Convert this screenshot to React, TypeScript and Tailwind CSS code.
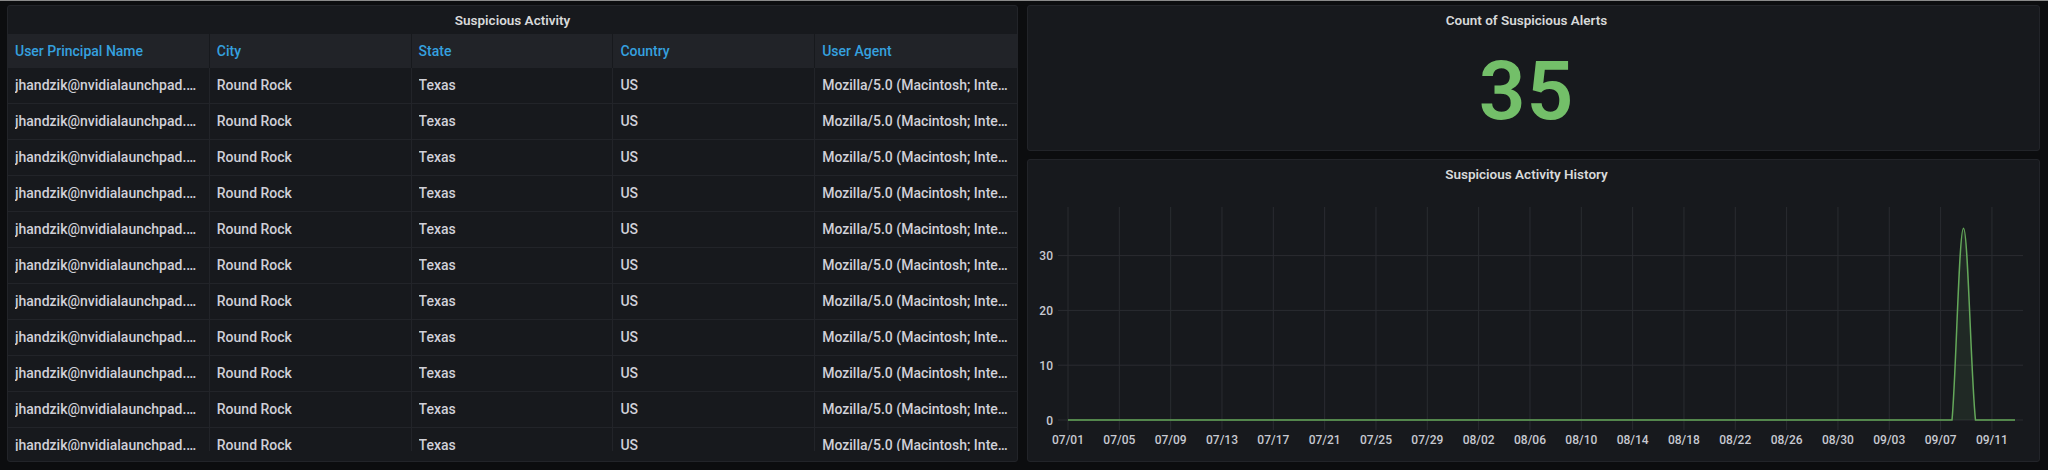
import React from "react";

// ---- data ----
const COLUMNS = ["User Principal Name", "City", "State", "Country", "User Agent"];

const ROWS = Array.from({ length: 11 }, (_, i) => ({
  id: i,
  upn: "jhandzik@nvidialaunchpad.onmicrosoft.com",
  city: "Round Rock",
  state: "Texas",
  country: "US",
  agent:
    "Mozilla/5.0 (Macintosh; Intel Mac OS X 10_15_7) AppleWebKit/537.36 (KHTML, like Gecko) Chrome/105.0.0.0 Safari/537.36",
}));

const X_LABELS = [
  "07/01", "07/05", "07/09", "07/13", "07/17", "07/21", "07/25", "07/29", "08/02", "08/06",
  "08/10", "08/14", "08/18", "08/22", "08/26", "08/30", "09/03", "09/07", "09/11",
];

const Y_TICKS = [0, 10, 20, 30];

// chart geometry (svg coords)
const X0 = 40;
const X_STEP = 51.33;
const Y0 = 232;
const Y_SCALE = 5.48;
const yOf = (v: number) => Y0 - v * Y_SCALE;

function Panel({
  title,
  className,
  titleClass = "",
  children,
}: {
  title: string;
  className?: string;
  titleClass?: string;
  children: React.ReactNode;
}) {
  return (
    <div
      className={`flex flex-col rounded-[3px] border border-[#222429] bg-[#17191d] overflow-hidden ${className ?? ""}`}
    >
      <div
        className={`h-[28px] shrink-0 flex items-center justify-center text-[13.5px] font-semibold text-[#d8d9da] ${titleClass}`}
      >
        {title}
      </div>
      {children}
    </div>
  );
}

function SuspiciousTable() {
  return (
    <Panel title="Suspicious Activity" className="w-[1011px] h-[457px]">
      <div className="flex-1 min-h-0 pb-[10px] flex flex-col">
        {/* 表头 */}
        <div className="grid grid-cols-5 h-[34px] shrink-0 bg-[#212328]">
          {COLUMNS.map((c) => (
            <div
              key={c}
              className="flex items-center px-[7px] border-r border-[#17191d] last:border-r-0 text-[14px] font-medium text-[#35a0df]"
            >
              {c}
            </div>
          ))}
        </div>
        {/* 数据行 */}
        <div className="flex-1 min-h-0 overflow-hidden">
          {ROWS.map((r) => (
            <div key={r.id} className="grid grid-cols-5 h-[36px] border-b border-[#222429]">
              {[r.upn, r.city, r.state, r.country, r.agent].map((v, j) => (
                <div
                  key={j}
                  className="flex items-center min-w-0 px-[7px] border-r border-[#222429] last:border-r-0 text-[14px] font-medium text-[#d0d0d8]"
                >
                  <span className="truncate">{v}</span>
                </div>
              ))}
            </div>
          ))}
        </div>
      </div>
    </Panel>
  );
}

function StatPanel() {
  return (
    <Panel title="Count of Suspicious Alerts" className="h-[146px]" titleClass="pr-[14px]">
      <div className="flex-1 flex items-center justify-center pr-[14px] pb-[2px]">
        <span className="text-[82px] leading-none font-semibold tracking-[1px] text-[#73bf69]">35</span>
      </div>
    </Panel>
  );
}

function HistoryChart() {
  const spike = `M${X0} ${Y0} L924 ${Y0} C928 190 931 ${yOf(35)} 935.5 ${yOf(35)} C940 ${yOf(35)} 943 190 947.5 ${Y0} L987 ${Y0}`;
  return (
    <Panel title="Suspicious Activity History" className="flex-1" titleClass="pr-[14px]">
      <svg width={1011} height={274} className="block shrink-0">
        {/* 网格 */}
        {X_LABELS.map((_, i) => {
          const x = X0 + i * X_STEP;
          return <line key={i} x1={x} x2={x} y1={19} y2={242} stroke="#2a2c31" strokeWidth={1} />;
        })}
        {Y_TICKS.map((v) => (
          <line key={v} x1={30} x2={995} y1={yOf(v)} y2={yOf(v)} stroke="#2a2c31" strokeWidth={1} />
        ))}
        {/* 坐标轴文字 */}
        {Y_TICKS.map((v) => (
          <text
            key={v}
            x={25}
            y={yOf(v) + 4.5}
            textAnchor="end"
            fontSize={12}
            fontWeight={500}
            fill="#c7c9d1"
            fontFamily="Roboto, 'Liberation Sans', sans-serif"
          >
            {v}
          </text>
        ))}
        {X_LABELS.map((l, i) => (
          <text
            key={l}
            x={X0 + i * X_STEP}
            y={256}
            textAnchor="middle"
            fontSize={12}
            fontWeight={500}
            fill="#c7c9d1"
            fontFamily="Roboto, 'Liberation Sans', sans-serif"
          >
            {l}
          </text>
        ))}
        {/* 数据 */}
        <path d={spike + ` L${X0} ${Y0} Z`} fill="rgba(115,191,105,0.1)" stroke="none" />
        <path d={spike} fill="none" stroke="#64a85a" strokeWidth={1.5} />
      </svg>
    </Panel>
  );
}

export default function App() {
  return (
    <div
      className="w-[2048px] h-[470px] bg-[#0c0d0f] border-t border-[#8a8a8a] pt-[4px] pl-[7px] flex gap-[9px]"
      style={{ fontFamily: "Roboto, 'Liberation Sans', sans-serif" }}
    >
      <SuspiciousTable />
      <div className="w-[1013px] h-[457px] flex flex-col gap-[8px]">
        <StatPanel />
        <HistoryChart />
      </div>
    </div>
  );
}
